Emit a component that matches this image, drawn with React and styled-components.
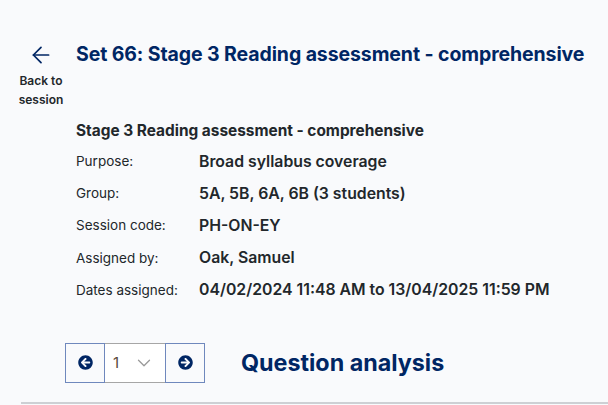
import React from "react";
import styled, { createGlobalStyle } from "styled-components";
import { ArrowLeft, ChevronDown } from "lucide-react";
import { FaArrowCircleLeft, FaArrowCircleRight } from "react-icons/fa";

const GlobalStyle = createGlobalStyle`
  html, body {
    margin: 0;
    padding: 0;
    background: #f9fafc;
  }
  body {
    font-family: "Inter", "Noto Sans", sans-serif;
    color: #22272b;
  }
`;

const details = [
  { label: "Purpose:", value: "Broad syllabus coverage" },
  { label: "Group:", value: "5A, 5B, 6A, 6B (3 students)" },
  { label: "Session code:", value: "PH-ON-EY" },
  { label: "Assigned by:", value: "Oak, Samuel" },
  { label: "Dates assigned:", value: "04/02/2024 11:48 AM to 13/04/2025 11:59 PM" },
];

const App = () => (
  <>
    <GlobalStyle />
    <Page>
      <Header>
        <BackLink href="#">
          <ArrowLeft size={26} strokeWidth={1.6} color="#002664" />
          <BackText>Back to session</BackText>
        </BackLink>
        <Title>Set 66: Stage 3 Reading assessment - comprehensive</Title>
      </Header>
      <Details>
        <SubTitle>Stage 3 Reading assessment - comprehensive</SubTitle>
        <InfoGrid>
          {details.map((d) => (
            <React.Fragment key={d.label}>
              <Label>{d.label}</Label>
              <Value>{d.value}</Value>
            </React.Fragment>
          ))}
        </InfoGrid>
      </Details>
      <Toolbar>
        <Pager>
          <PagerButton aria-label="Previous">
            <FaArrowCircleLeft size={15} color="#002664" />
          </PagerButton>
          <PageSelect>
            <span>1</span>
            <ChevronDown size={22} strokeWidth={1.4} color="#9a9a9a" />
          </PageSelect>
          <PagerButton aria-label="Next">
            <FaArrowCircleRight size={15} color="#002664" />
          </PagerButton>
        </Pager>
        <SectionTitle>Question analysis</SectionTitle>
      </Toolbar>
      <Divider />
    </Page>
  </>
);

const Page = styled.div`
  width: 608px;
  height: 405px;
  box-sizing: border-box;
  padding-top: 42px;
  overflow: hidden;
`;

const Header = styled.div`
  display: flex;
  align-items: flex-start;
  padding-left: 18px;
`;

const BackLink = styled.a`
  display: flex;
  flex-direction: column;
  align-items: center;
  width: 46px;
  margin-right: 12px;
  text-decoration: none;
  color: #22272b;
`;

const BackText = styled.span`
  font-size: 12px;
  font-weight: 600;
  line-height: 19px;
  text-align: center;
  margin-top: 3px;
`;

const Title = styled.h1`
  margin: 0;
  font-size: 19.5px;
  font-weight: 700;
  line-height: 24px;
  color: #002664;
  letter-spacing: -0.1px;
`;

const Details = styled.div`
  padding-left: 76px;
  margin-top: 12px;
`;

const SubTitle = styled.h2`
  margin: 2px 0 4px;
  font-size: 15.4px;
  font-weight: 700;
  line-height: 20px;
`;

const InfoGrid = styled.div`
  display: grid;
  grid-template-columns: 123px auto;
  grid-auto-rows: 32.2px;
  align-items: center;
`;

const Label = styled.div`
  font-size: 13.5px;
  font-weight: 400;
`;

const Value = styled.div`
  font-size: 15.8px;
  font-weight: 600;
`;

const Toolbar = styled.div`
  display: flex;
  align-items: center;
  gap: 36px;
  padding-left: 65px;
  margin-top: 37px;
`;

const Pager = styled.div`
  display: flex;
  height: 40px;
`;

const PagerButton = styled.button`
  width: 40px;
  height: 40px;
  box-sizing: border-box;
  border: 1px solid #6f88bd;
  background: #f9fafc;
  display: flex;
  align-items: center;
  justify-content: center;
  padding: 0;
  cursor: pointer;
`;

const PageSelect = styled.div`
  width: 60px;
  height: 40px;
  box-sizing: border-box;
  border-top: 1px solid #a6a6a6;
  border-bottom: 1px solid #a6a6a6;
  background: #ffffff;
  display: flex;
  align-items: center;
  justify-content: space-between;
  padding: 0 10px 0 8px;
  font-size: 15px;
  color: #5a4a3a;
`;

const SectionTitle = styled.h2`
  margin: 0;
  font-size: 23.3px;
  font-weight: 700;
  color: #002664;
`;

const Divider = styled.div`
  margin-left: 21px;
  margin-top: 19px;
  height: 2px;
  background: #cdd0d4;
`;

export default App;
